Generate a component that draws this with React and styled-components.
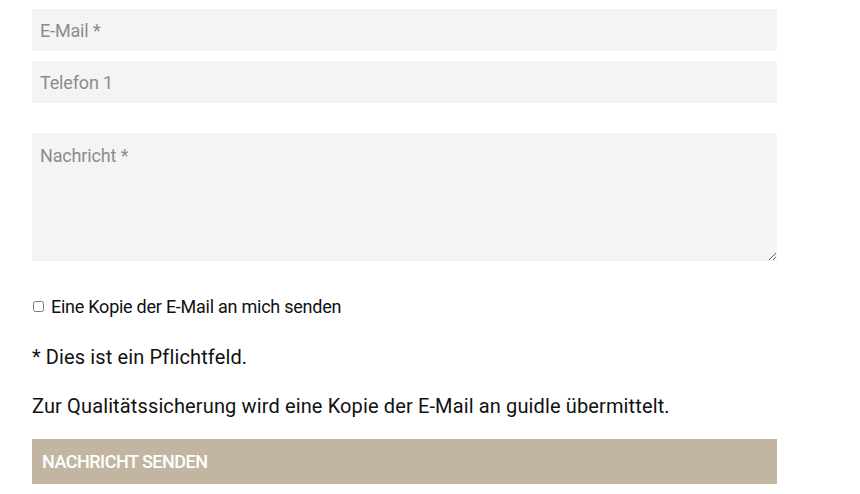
import React from 'react';
import styled, {createGlobalStyle} from 'styled-components';

const GlobalStyle = createGlobalStyle`
body {
    margin: 0;
    background: #ffffff;
    font-family: Roboto, "Liberation Sans", sans-serif;
}
`;

const Form = styled.form`
    display: flex;
    flex-direction: column;
    width: 745px;
    padding: 9px 0 0 32px;
`;

const Field = styled.input`
    box-sizing: border-box;
    height: 42px;
    margin-bottom: ${props => props.gap || 0}px;
    padding: 0 8px;
    border: none;
    outline: none;
    background: #f4f4f4;
    font-family: Roboto, sans-serif;
    font-size: 18px;
    letter-spacing: -0.15px;
    color: #333;
    &::placeholder {
        color: #8c8c8c;
    }
`;

const Message = styled.textarea`
    box-sizing: border-box;
    height: 128px;
    padding: 12px 8px;
    border: none;
    outline: none;
    resize: vertical;
    background: #f4f4f4;
    font-family: Roboto, sans-serif;
    font-size: 18px;
    letter-spacing: -0.15px;
    line-height: 22px;
    &::placeholder {
        color: #8c8c8c;
    }
`;

const CopyRow = styled.label`
    display: flex;
    align-items: center;
    gap: 6px;
    margin-top: 32px;
    height: 26px;
    font-family: Roboto, sans-serif;
    font-size: 18px;
    letter-spacing: -0.25px;
    color: #111;
    input {
        width: 11px;
        height: 11px;
        margin: 0 1px 0 1px;
    }
`;

const Note = styled.p`
    margin: ${props => props.top}px 0 0 0;
    height: 26px;
    line-height: 26px;
    font-family: Roboto, sans-serif;
    font-size: 20px;
    letter-spacing: 0.13px;
    color: #111;
`;

const Submit = styled.button`
    box-sizing: border-box;
    margin-top: 20px;
    height: 45px;
    padding: 0 10px;
    border: none;
    background: #c2b6a2;
    color: #ffffff;
    text-align: left;
    font-family: Roboto, sans-serif;
    font-size: 18px;
    font-weight: 500;
    letter-spacing: -0.5px;
    text-transform: uppercase;
`;

export default class App extends React.Component {
    render() {
        return (
            <Form onSubmit={e => e.preventDefault()}>
                <GlobalStyle/>
                <Field placeholder="E-Mail *" gap={10}/>
                <Field placeholder="Telefon 1" gap={30}/>
                <Message placeholder="Nachricht *"/>
                <CopyRow>
                    <input type="checkbox"/>
                    Eine Kopie der E-Mail an mich senden
                </CopyRow>
                <Note top={25}>* Dies ist ein Pflichtfeld.</Note>
                <Note top={23}>Zur Qualitätssicherung wird eine Kopie der E-Mail an guidle übermittelt.</Note>
                <Submit type="submit">Nachricht senden</Submit>
            </Form>
        )
    }
}
